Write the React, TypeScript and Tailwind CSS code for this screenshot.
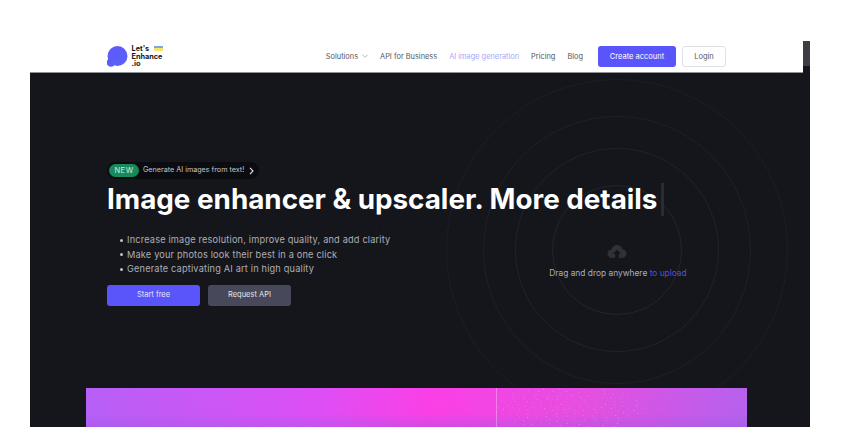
import React from 'react'

const bullets = [
    'Increase image resolution, improve quality, and add clarity',
    'Make your photos look their best in a one click',
    'Generate captivating AI art in high quality',
]

// speckle on the right half of the banner picture
const dots = Array.from({ length: 170 }, (_, i) => {
    const a = i * 2.399
    const r = Math.sqrt(i) * 3.2
    return { x: 72 + Math.cos(a) * r * 1.8, y: 20 + Math.sin(a) * r * 0.55, o: 0.2 + ((i * 7) % 10) / 22 }
})

function Logo() {
    return (
        <div className="flex items-center w-[56px] h-[21px] relative">
            <svg width="21" height="21" viewBox="0 0 21 21" className="shrink-0">
                <defs>
                    <linearGradient id="blob" x1="0" y1="0" x2="1" y2="1">
                        <stop offset="0" stopColor="#5f58ff" />
                        <stop offset="1" stopColor="#5a62f5" />
                    </linearGradient>
                </defs>
                <circle cx="10.5" cy="10" r="10" fill="url(#blob)" />
                <circle cx="4" cy="16.5" r="4.3" fill="url(#blob)" />
            </svg>
            <div className="ml-[3.5px] text-[7.3px] leading-[7.4px] font-bold text-[#14161b]">
                Let's
                <br />
                Enhance
                <br />
                .io
            </div>
            <div className="absolute left-[47px] top-0 w-[9px] h-[5px] flex flex-col">
                <div className="h-[2px] bg-[#7fa4e6]" />
                <div className="h-[3px] bg-[#f6e46e]" />
            </div>
        </div>
    )
}

function Header() {
    return (
        <div className="flex h-[32px] bg-[#14161b] shrink-0">
            <header className="w-[773px] h-full bg-white border-b border-[#8f9095] flex items-center pl-[77px] pr-[77px] justify-between">
                <Logo />
                <nav className="flex items-center text-[7.4px] text-[#55575e]">
                    <span className="flex items-center">
                        Solutions
                        <svg width="6" height="4" viewBox="0 0 6 4" className="ml-[4px]" fill="none" stroke="#9a9ca3" strokeWidth="0.7">
                            <path d="M0.3 0.6 L3 3.3 L5.7 0.6" />
                        </svg>
                    </span>
                    <span className="ml-[12px]">API for Business</span>
                    <span className="ml-[12px] text-[#a9a6f9]">AI image generation</span>
                    <span className="ml-[12px]">Pricing</span>
                    <span className="ml-[12px]">Blog</span>
                    <button className="ml-[15px] w-[78px] h-[21px] rounded-[3px] bg-[#5a55fb] text-white text-[7.5px]">
                        Create account
                    </button>
                    <button className="ml-[6px] w-[44px] h-[21px] rounded-[3px] border border-[#dfe0e6] bg-white text-[#55575e] text-[7.5px]">
                        Login
                    </button>
                </nav>
            </header>
            <div className="w-[7px] h-[25px] bg-[#3c3e44]" />
        </div>
    )
}

function Rings() {
    return (
        <div className="absolute left-[587px] top-[177px] w-0 h-0">
            <div className="absolute -left-[65px] -top-[65px] w-[130px] h-[130px] rounded-full border border-[#23252a]" />
            <div className="absolute -left-[102px] -top-[102px] w-[204px] h-[204px] rounded-full border border-[#212328]" />
            <div className="absolute -left-[134px] -top-[134px] w-[268px] h-[268px] rounded-full border border-[#1e2025]" />
            <div className="absolute -left-[171px] -top-[171px] w-[342px] h-[342px] rounded-full border border-[#1c1e23]" />
            <div className="absolute -left-[242px] -top-[242px] w-[484px] h-[484px] rounded-full border border-[#17191e]" />
        </div>
    )
}

function Hero() {
    return (
        <main className="relative flex-1 bg-[#14161b] overflow-hidden flex flex-col">
            <Rings />
            <div className="relative pl-[77px] pt-[89px] flex-1">
                <div className="flex items-center w-[152px] h-[17px] rounded-full bg-[#0b0c10] pl-[2px]">
                    <span className="w-[30px] h-[13px] rounded-full bg-[#178a5c] text-[#d5ebe1] text-[7.5px] tracking-[0.5px] flex items-center justify-center">
                        NEW
                    </span>
                    <span className="ml-[4px] text-[7.2px] text-[#c5c6cc] whitespace-nowrap">Generate AI images from text!</span>
                    <svg width="5" height="8" viewBox="0 0 5 8" className="ml-[5px]" fill="none" stroke="#e5e5e8" strokeWidth="1.1">
                        <path d="M1 0.8 L4 4 L1 7.2" />
                    </svg>
                </div>
                <div className="flex items-center mt-[3px] h-[34px]">
                    <h1 className="text-[27.8px] leading-[34px] font-bold text-white whitespace-nowrap">
                        Image enhancer &amp; upscaler. More details
                    </h1>
                    <div className="ml-[4px] w-[3px] h-[33px] bg-[#2a2c31]" />
                </div>
                <ul className="mt-[17px] ml-[13px] text-[9.2px] leading-[14.5px] tracking-[0.18px] text-[#adafb6]">
                    {bullets.map((b) => (
                        <li key={b} className="flex items-center gap-[4px]">
                            <span className="w-[3px] h-[3px] rounded-full bg-[#c0c1c7]" />
                            {b}
                        </li>
                    ))}
                </ul>
                <div className="flex mt-[8px] gap-[8px]">
                    <button className="w-[93px] h-[21px] rounded-[3px] bg-[#5a55fb] text-[#e5e5fb] text-[7.5px]">
                        Start free
                    </button>
                    <button className="w-[83px] h-[21px] rounded-[3px] bg-[#474859] text-[#e5e5e8] text-[7.5px]">
                        Request API
                    </button>
                </div>
            </div>
            <div className="absolute left-[487px] top-[172px] w-[200px] flex flex-col items-center">
                <svg width="20" height="13" viewBox="0 0 21 14">
                    <path fill="#2f3136" d="M10.5 0 C13.5 0 15.8 2 16.3 4.6 C18.8 4.8 20.8 6.7 20.8 9.2 C20.8 11.8 18.6 14 16 14 L12.5 14 L12.5 9.5 L15 9.5 L10.5 5 L6 9.5 L8.5 9.5 L8.5 14 L4.8 14 C2.2 14 0.2 12 0.2 9.4 C0.2 7 2 5 4.4 4.8 C5.2 2 7.6 0 10.5 0 Z" />
                </svg>
                <div className="mt-[9px] ml-[2px] text-[8.4px] text-[#adafb6] whitespace-nowrap">
                    Drag and drop anywhere <span className="text-[#5450d6]">to upload</span>
                </div>
            </div>
            <div className="relative mx-[56px] w-[661px] h-[39px] shrink-0 overflow-hidden bg-[linear-gradient(100deg,#b660f6_0%,#dd4ff5_35%,#fb3fe6_52%,#e54fe0_75%,#b462ee_100%)]">
                <div className="absolute inset-x-0 bottom-0 h-[14px] bg-gradient-to-b from-transparent to-[#9a5ae0]/40" />
                <div className="absolute left-[410px] top-0 bottom-0 w-[1px] bg-white/30" />
                <svg width="251" height="39" viewBox="0 0 251 39" className="absolute left-[410px] top-0">
                    {dots.map((d, i) => (
                        <rect key={i} x={d.x} y={d.y} width="0.8" height="0.8" fill="#ffd0f5" opacity={d.o} />
                    ))}
                </svg>
            </div>
        </main>
    )
}

export default function App() {
    return (
        <div className="w-[868px] h-[445px] bg-white pt-[41px] pl-[30px] overflow-hidden font-['Inter',sans-serif]">
            <div className="w-[780px] h-[386px] flex flex-col">
                <Header />
                <Hero />
            </div>
        </div>
    )
}
